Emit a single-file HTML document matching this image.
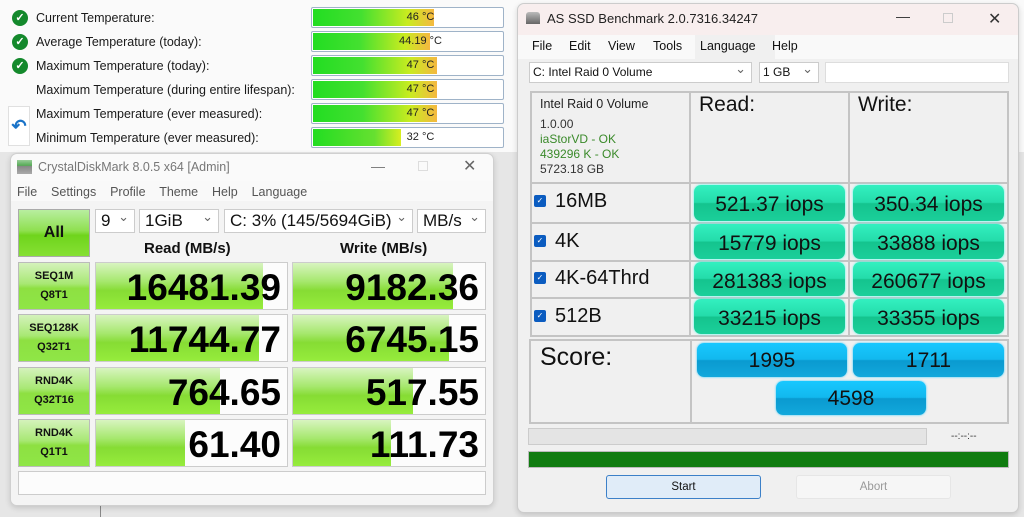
<!DOCTYPE html>
<html><head><meta charset="utf-8"><style>
*{box-sizing:border-box;margin:0;padding:0}
body{width:1024px;height:517px;overflow:hidden;position:relative;background:#fafafa;font-family:"Liberation Sans",sans-serif;color:#111}
.a{position:absolute}
.lbl{font-size:12.5px;color:#1a1a1a}
.chk{width:16px;height:16px;border-radius:50%;background:#14892c;color:#fff;font-size:11px;line-height:16px;text-align:center;font-weight:bold}
.tb{position:absolute;left:311px;width:193px;height:21px;border:1px solid #9fb3c8;border-radius:2px;background:#fff;overflow:hidden}
.tb i{position:absolute;left:1px;top:1px;bottom:1px;background:linear-gradient(90deg,#22dd22 0%,#44e030 40%,#c8ec20 78%,#f5b840 100%)}
.tb span{position:absolute;left:0;right:0;top:3px;text-align:center;font-size:11px;color:#222;padding-left:26px}
.dd{position:absolute;height:24px;border:1px solid #ccc;background:#fff;font-size:17px;line-height:22px;padding-left:5px;color:#111}
.dd:after{content:"⌄";position:absolute;right:5px;top:-4px;font-size:13px;color:#666}
.lab{position:absolute;left:18px;width:72px;border:1px solid #bbb;background:linear-gradient(#d4f2bb,#a8e874 45%,#8ee042 55%,#8fe646);font-weight:bold;font-size:11px;text-align:center;line-height:19px;padding-top:4px}
.val{position:absolute;border:1px solid #ccc;background:#fcfcfc;overflow:hidden}
.val i{position:absolute;left:0;top:0;bottom:0;background:linear-gradient(#d8f4c0,#a6e86e 40%,#86dc34 60%,#96ec3c)}
.val span{position:absolute;right:6px;top:4px;font-size:37px;font-weight:bold;letter-spacing:0;color:#000;line-height:42px}
.tm{background:linear-gradient(#33f0c0 0%,#24dcaa 48%,#14c48e 52%,#1bcf9a 100%);border-radius:7px;box-shadow:0 0 2px #4fe;position:absolute;text-align:center;font-size:21px;line-height:39px;color:#111}
.bl{background:linear-gradient(#18c8ff 0%,#12b8ee 48%,#0a9ad0 52%,#12a8dc 100%);border-radius:7px;box-shadow:0 0 2px #3cf;position:absolute;text-align:center;font-size:21px;line-height:36px;color:#111}
.cb{position:absolute;left:534px;width:12px;height:12px;background:#0b5cc0;border-radius:2px;color:#fff;font-size:8px;line-height:12px;text-align:center}
.rn{position:absolute;left:555px;font-size:20px;color:#111}
.ln{position:absolute;background:#c4c4c4}
</style></head><body>
<div class="a" style="left:0;top:152px;width:1024px;height:365px;background:#e6e6e6"></div>
<div class="a" style="left:100px;top:460px;width:420px;height:57px;border-left:1px solid #888"></div>

<div class="a chk" style="left:12px;top:10px">✓</div>
<div class="a chk" style="left:12px;top:34px">✓</div>
<div class="a chk" style="left:12px;top:58px">✓</div>
<div class="a" style="left:8px;top:106px;width:22px;height:40px;background:#fff;border:1px solid #e0e0e0;color:#1a73c8;font-size:18px;text-align:center;line-height:38px;font-weight:bold">↶</div>
<div class="a lbl" style="left:36px;top:11px">Current Temperature:</div>
<div class="a lbl" style="left:36px;top:35px">Average Temperature (today):</div>
<div class="a lbl" style="left:36px;top:59px">Maximum Temperature (today):</div>
<div class="a lbl" style="left:36px;top:83px">Maximum Temperature (during entire lifespan):</div>
<div class="a lbl" style="left:36px;top:107px">Maximum Temperature (ever measured):</div>
<div class="a lbl" style="left:36px;top:131px">Minimum Temperature (ever measured):</div>
<div class="tb" style="top:7px"><i style="width:121px"></i><span>46 °C</span></div>
<div class="tb" style="top:31px"><i style="width:117px"></i><span>44.19 °C</span></div>
<div class="tb" style="top:55px"><i style="width:124px"></i><span>47 °C</span></div>
<div class="tb" style="top:79px"><i style="width:124px"></i><span>47 °C</span></div>
<div class="tb" style="top:103px"><i style="width:124px"></i><span>47 °C</span></div>
<div class="tb" style="top:127px"><i style="width:88px;background:linear-gradient(90deg,#22dd22,#66e030 70%,#d8ee20)"></i><span>32 °C</span></div>

<div class="a" style="left:10px;top:153px;width:484px;height:353px;background:#fafafa;border:1px solid #d0d0d0;border-radius:7px;box-shadow:0 2px 6px rgba(0,0,0,.15)"></div>
<div class="a" style="left:17px;top:160px;width:15px;height:14px;background:linear-gradient(#9c9 0,#5a5 40%,#888 45%,#aaa)"></div>
<div class="a" style="left:38px;top:160px;font-size:12.5px;color:#777">CrystalDiskMark 8.0.5 x64 [Admin]</div>
<div class="a" style="left:371px;top:158px;font-size:14px;color:#777">—</div>
<div class="a" style="left:418px;top:161px;width:10px;height:10px;border:1px solid #ddd"></div>
<div class="a" style="left:463px;top:156px;font-size:16px;color:#666">✕</div>
<div class="a" style="left:11px;top:181px;width:482px;height:20px;background:#f9f9f9"></div>
<div class="a" style="left:17px;top:185px;font-size:12.5px;color:#555">File&nbsp;&nbsp;&nbsp; Settings&nbsp;&nbsp;&nbsp; Profile&nbsp;&nbsp;&nbsp; Theme&nbsp;&nbsp;&nbsp; Help&nbsp;&nbsp;&nbsp; Language</div>
<div class="a" style="left:11px;top:201px;width:482px;height:304px;background:#f4f4f4;border-radius:0 0 7px 7px"></div>
<div class="a" style="left:18px;top:209px;width:72px;height:48px;border:1px solid #aaa;background:linear-gradient(#b8eea0,#8fe050 45%,#6fd41c 55%,#86e034);font-weight:bold;font-size:16px;text-align:center;line-height:46px">All</div>
<div class="dd" style="left:95px;top:209px;width:40px">9</div>
<div class="dd" style="left:139px;top:209px;width:80px">1GiB</div>
<div class="dd" style="left:224px;top:209px;width:189px">C: 3% (145/5694GiB)</div>
<div class="dd" style="left:417px;top:209px;width:69px">MB/s</div>
<div class="a" style="left:144px;top:240px;font-size:15px;font-weight:bold">Read (MB/s)</div>
<div class="a" style="left:340px;top:240px;font-size:15px;font-weight:bold">Write (MB/s)</div>

<div class="lab" style="top:262px;height:48px">SEQ1M<br>Q8T1</div>
<div class="lab" style="top:314px;height:48px">SEQ128K<br>Q32T1</div>
<div class="lab" style="top:367px;height:48px">RND4K<br>Q32T16</div>
<div class="lab" style="top:419px;height:48px">RND4K<br>Q1T1</div>

<div class="val" style="left:95px;top:262px;width:193px;height:48px"><i style="width:167px"></i><span>16481.39</span></div>
<div class="val" style="left:292px;top:262px;width:194px;height:48px"><i style="width:160px"></i><span>9182.36</span></div>
<div class="val" style="left:95px;top:314px;width:193px;height:48px"><i style="width:163px"></i><span>11744.77</span></div>
<div class="val" style="left:292px;top:314px;width:194px;height:48px"><i style="width:156px"></i><span>6745.15</span></div>
<div class="val" style="left:95px;top:367px;width:193px;height:48px"><i style="width:124px"></i><span>764.65</span></div>
<div class="val" style="left:292px;top:367px;width:194px;height:48px"><i style="width:120px"></i><span>517.55</span></div>
<div class="val" style="left:95px;top:419px;width:193px;height:48px"><i style="width:89px"></i><span>61.40</span></div>
<div class="val" style="left:292px;top:419px;width:194px;height:48px"><i style="width:98px"></i><span>111.73</span></div>
<div class="a" style="left:18px;top:471px;width:468px;height:24px;border:1px solid #ccc;background:#fcfcfc"></div>

<div class="a" style="left:517px;top:3px;width:502px;height:510px;background:#f0f0f0;border:1px solid #ccc;border-radius:7px;box-shadow:0 2px 6px rgba(0,0,0,.15)"></div>
<div class="a" style="left:518px;top:4px;width:500px;height:31px;background:#f8eeee;border-radius:7px 7px 0 0"></div>
<div class="a" style="left:526px;top:12px;width:14px;height:12px;background:linear-gradient(#bbb,#666);border-radius:3px 3px 0 0"></div>
<div class="a" style="left:547px;top:11px;font-size:13px;color:#222">AS SSD Benchmark 2.0.7316.34247</div>
<div class="a" style="left:896px;top:8px;font-size:14px;color:#333">—</div>
<div class="a" style="left:943px;top:13px;width:10px;height:10px;border:1px solid #ccc"></div>
<div class="a" style="left:988px;top:9px;font-size:16px;color:#333">✕</div>
<div class="a" style="left:518px;top:35px;width:500px;height:24px;background:#f9f9f9"></div>
<div class="a" style="left:695px;top:35px;width:80px;height:24px;background:#f0f0f0"></div>
<div class="a" style="left:532px;top:39px;font-size:12.5px;color:#111">File</div>
<div class="a" style="left:569px;top:39px;font-size:12.5px;color:#111">Edit</div>
<div class="a" style="left:608px;top:39px;font-size:12.5px;color:#111">View</div>
<div class="a" style="left:653px;top:39px;font-size:12.5px;color:#111">Tools</div>
<div class="a" style="left:700px;top:39px;font-size:12.5px;color:#111">Language</div>
<div class="a" style="left:772px;top:39px;font-size:12.5px;color:#111">Help</div>
<div class="dd" style="left:529px;top:62px;width:223px;height:21px;font-size:12px;line-height:19px;padding-left:3px">C: Intel Raid 0 Volume</div>
<div class="dd" style="left:759px;top:62px;width:60px;height:21px;font-size:12px;line-height:19px;padding-left:3px">1 GB</div>
<div class="a" style="left:825px;top:62px;width:184px;height:21px;background:#fff;border:1px solid #ddd"></div>

<div class="a" style="left:530px;top:91px;width:479px;height:246px;border:2px solid #c4c4c4"></div>
<div class="ln" style="left:689px;top:91px;width:2px;height:246px"></div>
<div class="ln" style="left:848px;top:91px;width:2px;height:246px"></div>
<div class="ln" style="left:530px;top:182px;width:479px;height:2px"></div>
<div class="ln" style="left:530px;top:222px;width:479px;height:2px"></div>
<div class="ln" style="left:530px;top:260px;width:479px;height:2px"></div>
<div class="ln" style="left:530px;top:297px;width:479px;height:2px"></div>
<div class="a" style="left:540px;top:97px;font-size:12.5px;color:#222">Intel Raid 0 Volume</div>
<div class="a" style="left:540px;top:117px;font-size:12px;color:#333">1.0.00</div>
<div class="a" style="left:540px;top:132px;font-size:12px;color:#3a8a2a">iaStorVD - OK</div>
<div class="a" style="left:540px;top:147px;font-size:12px;color:#3a8a2a">439296 K - OK</div>
<div class="a" style="left:540px;top:162px;font-size:12px;color:#333">5723.18 GB</div>
<div class="a" style="left:699px;top:93px;font-size:21px">Read:</div>
<div class="a" style="left:858px;top:93px;font-size:21px">Write:</div>

<div class="cb" style="top:195px">✓</div><div class="rn" style="top:190px">16MB</div>
<div class="cb" style="top:235px">✓</div><div class="rn" style="top:230px">4K</div>
<div class="cb" style="top:272px">✓</div><div class="rn" style="top:267px">4K-64Thrd</div>
<div class="cb" style="top:310px">✓</div><div class="rn" style="top:305px">512B</div>

<div class="tm" style="left:694px;top:185px;width:151px;height:36px">521.37 iops</div>
<div class="tm" style="left:853px;top:185px;width:151px;height:36px">350.34 iops</div>
<div class="tm" style="left:694px;top:224px;width:151px;height:35px">15779 iops</div>
<div class="tm" style="left:853px;top:224px;width:151px;height:35px">33888 iops</div>
<div class="tm" style="left:694px;top:262px;width:151px;height:34px">281383 iops</div>
<div class="tm" style="left:853px;top:262px;width:151px;height:34px">260677 iops</div>
<div class="tm" style="left:694px;top:299px;width:151px;height:35px">33215 iops</div>
<div class="tm" style="left:853px;top:299px;width:151px;height:35px">33355 iops</div>

<div class="a" style="left:529px;top:339px;width:480px;height:85px;border:2px solid #c4c4c4"></div>
<div class="ln" style="left:690px;top:339px;width:2px;height:85px"></div>
<div class="a" style="left:540px;top:343px;font-size:25px">Score:</div>
<div class="bl" style="left:697px;top:343px;width:150px;height:34px">1995</div>
<div class="bl" style="left:853px;top:343px;width:151px;height:34px">1711</div>
<div class="bl" style="left:776px;top:381px;width:150px;height:34px">4598</div>

<div class="a" style="left:528px;top:428px;width:399px;height:17px;background:#e4e4e4;border:1px solid #ccc"></div>
<div class="a" style="left:951px;top:431px;font-size:10px;color:#333">--:--:--</div>
<div class="a" style="left:528px;top:451px;width:481px;height:17px;background:#107c10;border:1px solid #bbb"></div>
<div class="a" style="left:606px;top:475px;width:155px;height:24px;background:#e0ecf8;border:1px solid #3c80c8;border-radius:3px;font-size:11.5px;text-align:center;line-height:22px">Start</div>
<div class="a" style="left:796px;top:475px;width:155px;height:24px;background:#f6f6f6;border:1px solid #e6e6e6;border-radius:3px;font-size:11.5px;text-align:center;line-height:22px;color:#999">Abort</div>
</body></html>
